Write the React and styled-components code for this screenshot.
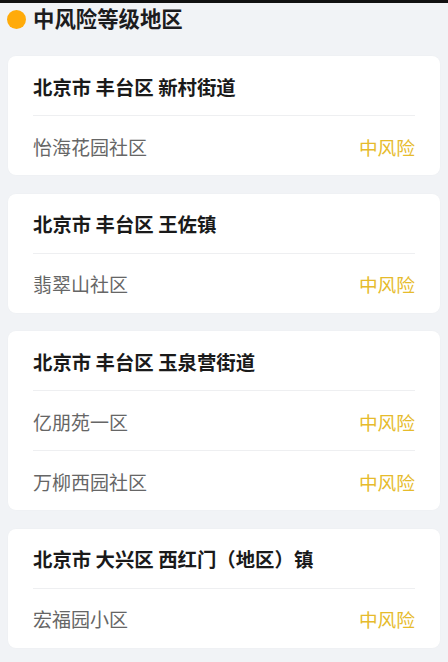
import styled, { createGlobalStyle } from "styled-components";

const GlobalStyle = createGlobalStyle`
  html, body {
    margin: 0;
    padding: 0;
    background: #f1f3f6;
  }

  body {
    font-family: "Noto Sans CJK SC", "Noto Sans", sans-serif;
  }
`;

const StyledPage = styled.div`
  width: 448px;
  min-height: 662px;
  background: #f1f3f6;
  border-top: 3px solid #111;
  box-sizing: border-box;
`;

const StyledHeader = styled.div`
  height: 53px;
  padding: 2px 0 0 7px;
  display: flex;
  align-items: flex-start;
  box-sizing: border-box;
  gap: 7px;
`;

const StyledDot = styled.span`
  width: 19px;
  height: 19px;
  margin-top: 5px;
  border-radius: 50%;
  background: #ffab0a;
  flex-shrink: 0;
`;

const StyledHeading = styled.h2`
  margin: 0;
  font-size: 21.4px;
  line-height: 26px;
  font-weight: 700;
  color: #1c1c1e;
`;

const StyledList = styled.div`
  display: flex;
  flex-direction: column;
  gap: 18.5px;
  padding: 0 8px;
`;

const StyledCard = styled.div`
  background: #fff;
  border-radius: 8px;
  padding: 0 25px;
  box-shadow: 0 0 2px rgba(0, 0, 0, 0.03);
`;

const StyledTitle = styled.div`
  height: 59px;
  padding-top: 1px;
  box-sizing: border-box;
  display: flex;
  align-items: center;
  font-size: 19.4px;
  font-weight: 700;
  color: #1a1a1a;
  white-space: pre;
`;

const StyledRow = styled.div`
  height: 60px;
  padding-top: 1px;
  box-sizing: border-box;
  border-top: 1px solid #eeeff1;
  display: flex;
  align-items: center;
  justify-content: space-between;
  font-size: 19px;
  color: #666;
`;

const StyledLevel = styled.span`
  color: #e6bb2c;
  font-size: 18.7px;
`;

const areas = [
  { title: "北京市 丰台区 新村街道", places: ["怡海花园社区"] },
  { title: "北京市 丰台区 王佐镇", places: ["翡翠山社区"] },
  { title: "北京市 丰台区 玉泉营街道", places: ["亿朋苑一区", "万柳西园社区"] },
  { title: "北京市 大兴区 西红门（地区）镇", places: ["宏福园小区"] },
];

export default function App() {
  return (
    <>
      <GlobalStyle />
      <StyledPage>
        <StyledHeader>
          <StyledDot />
          <StyledHeading>中风险等级地区</StyledHeading>
        </StyledHeader>
        <StyledList>
          {areas.map((area) => (
            <StyledCard key={area.title}>
              <StyledTitle>{area.title}</StyledTitle>
              {area.places.map((place) => (
                <StyledRow key={place}>
                  <span>{place}</span>
                  <StyledLevel>中风险</StyledLevel>
                </StyledRow>
              ))}
            </StyledCard>
          ))}
        </StyledList>
      </StyledPage>
    </>
  );
}
